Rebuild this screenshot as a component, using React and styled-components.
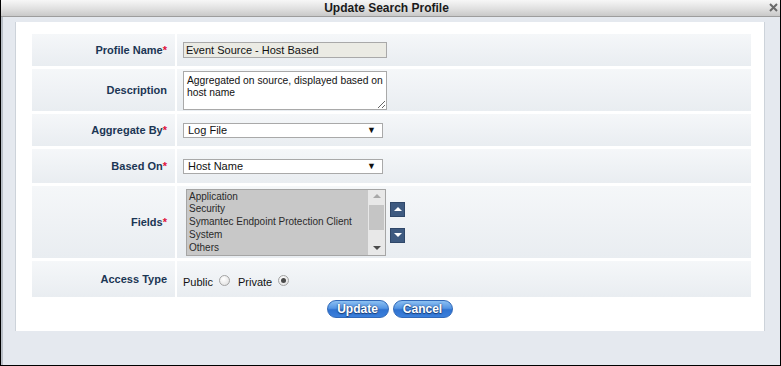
import React from "react";
import styled, { createGlobalStyle } from "styled-components";

const Global = createGlobalStyle`
    html, body {
        margin: 0;
        padding: 0;
        overflow: hidden;
        background: #ffffff;
    }
    * {
        box-sizing: border-box;
    }
`

const Dialog = styled.div`
    width: 781px;
    height: 366px;
    display: flex;
    flex-flow: column nowrap;
    border: 1px solid #000;
    border-top: none;
    font-family: "Liberation Sans", Arial, sans-serif;
    font-size: 11px;
    color: #222;
`

const TitleBar = styled.div`
    position: relative;
    height: 17px;
    flex: none;
    display: flex;
    align-items: center;
    justify-content: center;
    background: linear-gradient(#f7f7f7, #e2e2e2 50%, #c9c9c9);
    border-bottom: 1px solid #9d9d9d;
    font-size: 12px;
    font-weight: bold;
    color: #1a1a1a;
    padding-right: 8px;
`

const Close = styled.span`
    position: absolute;
    right: 2px;
    top: 3px;
    width: 9px;
    height: 9px;
    display: flex;
`

const Body = styled.div`
    flex: 1;
    background: #e5e9ef;
    box-shadow: inset 2px 0 0 #b9bfc7;
    padding: 5px 15px 34px 14px;
    display: flex;
`

const Panel = styled.div`
    flex: 1;
    background: #fff;
    border-left: 1px solid #cdd3da;
    border-right: 1px solid #cdd3da;
    padding: 12px 13px 0 16px;
    display: flex;
    flex-flow: column nowrap;
    gap: 3px;
`

const Row = styled.div`
    display: grid;
    grid-template-columns: 143px 1fr;
    column-gap: 2px;
    height: ${(p) => p.h}px;
`

const Cell = styled.div`
    background: linear-gradient(#f5f7f9, #e9edf1);
    display: flex;
    align-items: center;
`

const Label = styled(Cell)`
    justify-content: flex-end;
    padding-right: 8px;
    font-weight: bold;
    color: #1b3654;
`

const Star = styled.span`
    color: #e0103a;
`

const Value = styled(Cell)`
    padding-left: ${(p) => p.pad || 6}px;
    gap: 4px;
`

const TextInput = styled.input`
    width: 204px;
    height: 16px;
    border: 1px solid #a9a9a9;
    background: #ebebe4;
    font: 11px "Liberation Sans", Arial, sans-serif;
    color: #111;
    padding: 0 2px;
    margin: 0;
    outline: none;
`

const TextArea = styled.textarea`
    width: 204px;
    height: 39px;
    border: 1px solid #a9a9a9;
    font: 10.3px "Liberation Sans", Arial, sans-serif;
    color: #111;
    padding: 3px 1px 1px 3px;
    margin: 0;
    line-height: 12px;
    outline: none;
    overflow: hidden;
`

const SelectBox = styled.div`
    width: 200px;
    height: 15px;
    border: 1px solid #a9a9a9;
    background: #fff;
    display: flex;
    align-items: center;
    justify-content: space-between;
    padding: 0 6px 0 4px;
    color: #111;
`

const Arrow = styled.span`
    font-size: 9px;
    color: #111;
`

const Listbox = styled.div`
    width: 200px;
    height: 67px;
    border: 1px solid #a5a5a5;
    background: #c8c8c8;
    display: flex;
`

const Items = styled.div`
    flex: 1;
    padding: 1px 2px 0;
    font-size: 10px;
    line-height: 12.8px;
    white-space: nowrap;
    overflow: hidden;
    color: #2a2a2a;
`

const Scrollbar = styled.div`
    width: 17px;
    background: #e8e8e8;
    display: flex;
    flex-flow: column nowrap;
    align-items: center;
    justify-content: space-between;
    padding: 4px 0 5px;
`

const Thumb = styled.div`
    width: 15px;
    height: 25px;
    background: #c5c5c5;
    margin-top: -8px;
`

const Tri = styled.span`
    width: 0;
    height: 0;
    border-left: 4px solid transparent;
    border-right: 4px solid transparent;
    ${(p) => (p.down ? `border-top: 4px solid ${p.c};` : `border-bottom: 4px solid ${p.c};`)}
`

const MoveButtons = styled.div`
    display: flex;
    flex-flow: column nowrap;
    gap: 11px;
`

const MoveButton = styled.button`
    width: 15px;
    height: 15px;
    padding: 0;
    border: 1px solid #2f4769;
    background: #3e5a80;
    display: flex;
    align-items: center;
    justify-content: center;
`

const RadioGroup = styled.div`
    display: flex;
    align-items: center;
    padding-top: 2px;
    color: #111;
    font-size: 11px;
`

const RadioLabel = styled.span`
    margin-top: 4px;
    margin-right: 6px;
`

const Radio = styled.span`
    width: 11px;
    height: 11px;
    border-radius: 50%;
    border: 1px solid #a3a3a3;
    background: radial-gradient(circle at 40% 35%, #ffffff, #dcdcdc);
    display: flex;
    align-items: center;
    justify-content: center;
    margin-right: 8px;
    &::after {
        content: "";
        width: 5px;
        height: 5px;
        border-radius: 50%;
        background: ${(p) => (p.checked ? "#4a4a4a" : "transparent")};
    }
`

const ButtonBar = styled.div`
    display: flex;
    justify-content: center;
    gap: 4px;
    padding-right: 4px;
`

const Pill = styled.button`
    width: ${(p) => p.w}px;
    height: 18px;
    border-radius: 9px;
    border: 1px solid #3169b8;
    background: linear-gradient(#8cc0f2, #5596e4 45%, #2f72d0 55%, #3a7fdc);
    color: #fff;
    font: bold 12px "Liberation Sans", Arial, sans-serif;
    text-shadow: 0 0 2px #1b3f77, 0 1px 1px #1b3f77;
    padding: 0;
`

const fields = ["Application", "Security", "Symantec Endpoint Protection Client", "System", "Others"];

const App = () => {
    return (
        <>
            <Global />
            <Dialog>
                <TitleBar>
                    Update Search Profile
                    <Close>
                        <svg width="9" height="9" viewBox="0 0 9 9">
                            <path d="M1 1 L8 8 M8 1 L1 8" stroke="#6a6a6a" strokeWidth="2" />
                        </svg>
                    </Close>
                </TitleBar>
                <Body>
                    <Panel>
                        <Row h={32}>
                            <Label>Profile Name<Star>*</Star></Label>
                            <Value>
                                <TextInput readOnly value="Event Source - Host Based" />
                            </Value>
                        </Row>
                        <Row h={42}>
                            <Label>Description</Label>
                            <Value>
                                <TextArea readOnly value="Aggregated on source, displayed based on host name" />
                            </Value>
                        </Row>
                        <Row h={32}>
                            <Label>Aggregate By<Star>*</Star></Label>
                            <Value>
                                <SelectBox>Log File<Arrow>▼</Arrow></SelectBox>
                            </Value>
                        </Row>
                        <Row h={34}>
                            <Label>Based On<Star>*</Star></Label>
                            <Value>
                                <SelectBox>Host Name<Arrow>▼</Arrow></SelectBox>
                            </Value>
                        </Row>
                        <Row h={72}>
                            <Label>Fields<Star>*</Star></Label>
                            <Value pad={9}>
                                <Listbox>
                                    <Items>
                                        {fields.map((f) => (
                                            <div key={f}>{f}</div>
                                        ))}
                                    </Items>
                                    <Scrollbar>
                                        <Tri c="#a8a8a8" />
                                        <Thumb />
                                        <Tri down c="#4a4a4a" />
                                    </Scrollbar>
                                </Listbox>
                                <MoveButtons>
                                    <MoveButton><Tri c="#fff" /></MoveButton>
                                    <MoveButton><Tri down c="#fff" /></MoveButton>
                                </MoveButtons>
                            </Value>
                        </Row>
                        <Row h={36}>
                            <Label>Access Type</Label>
                            <Value>
                                <RadioGroup>
                                    <RadioLabel>Public</RadioLabel>
                                    <Radio />
                                    <RadioLabel>Private</RadioLabel>
                                    <Radio checked />
                                </RadioGroup>
                            </Value>
                        </Row>
                        <ButtonBar>
                            <Pill w={62}>Update</Pill>
                            <Pill w={60}>Cancel</Pill>
                        </ButtonBar>
                    </Panel>
                </Body>
            </Dialog>
        </>
    );
};

export default App;
